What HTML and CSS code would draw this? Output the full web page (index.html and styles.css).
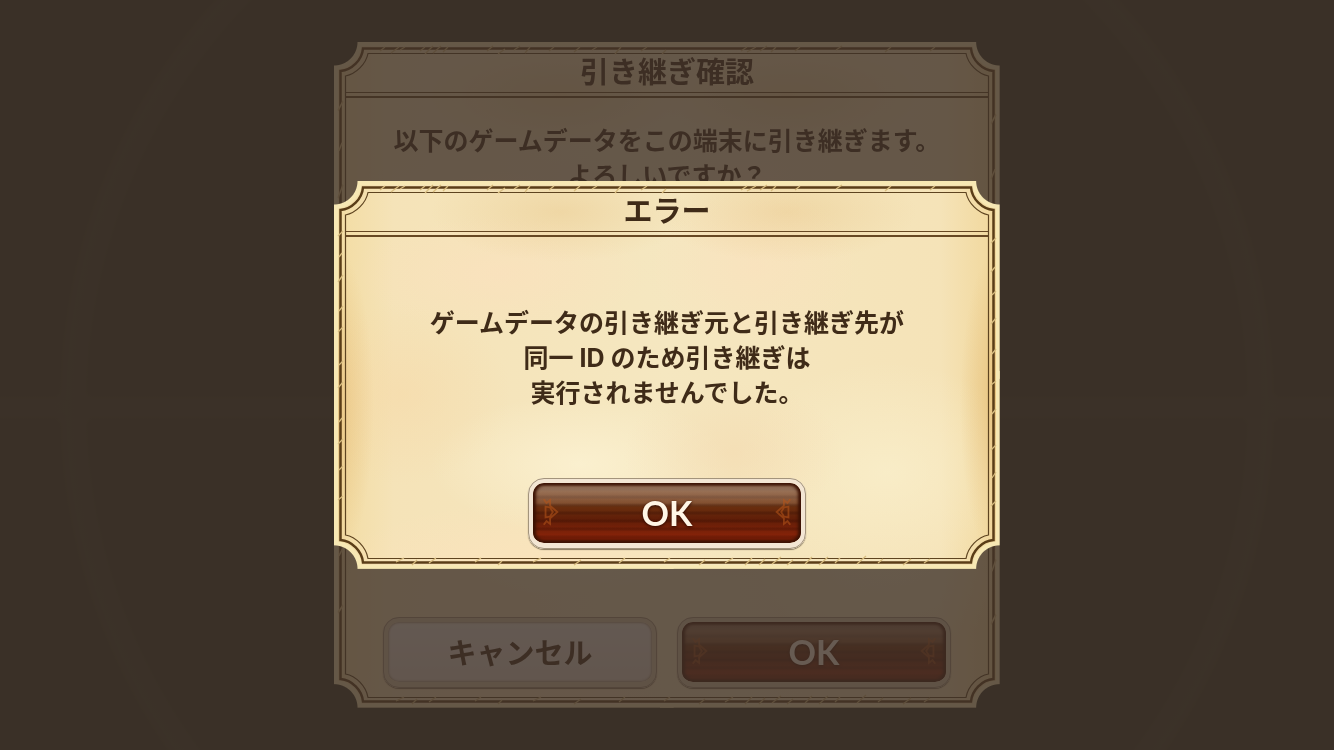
FILE: index.html
```html
<!DOCTYPE html>
<html lang="ja">
<head>
<meta charset="utf-8">
<meta name="viewport" content="width=device-width, initial-scale=1">
<title>エラー</title>
<link rel="stylesheet" href="styles.css">
</head>
<body>
<svg class="defs" aria-hidden="true">
  <symbol id="ornament" viewBox="0 0 22 38">
    <path d="M3 5 L6 9 L10 6 L10 12 L18 19 L10 26 L10 32 L6 29 L3 33 M5 13 L10 14 L13 19 L10 24 L5 25 Z" fill="none" stroke="#b8561a" stroke-width="2"/>
  </symbol>
</svg>
<main class="stage">
  <section class="panel panel-confirm" aria-labelledby="confirm-title">
    <h2 class="panel-title" id="confirm-title">引き継ぎ確認</h2>
    <p class="message">以下のゲームデータをこの端末に引き継ぎます。<br>よろしいですか？</p>
    <div class="actions">
      <button class="btn btn-light" type="button"><span>キャンセル</span></button>
      <button class="btn btn-brown" type="button">
        <svg class="mark" aria-hidden="true"><use href="#ornament"/></svg>
        <span>OK</span>
        <svg class="mark mark-end" aria-hidden="true"><use href="#ornament"/></svg>
      </button>
    </div>
  </section>
  <div class="shade"></div>
  <section class="panel panel-error" role="alertdialog" aria-modal="true" aria-labelledby="error-title" aria-describedby="error-text">
    <h1 class="panel-title" id="error-title">エラー</h1>
    <p class="message" id="error-text">ゲームデータの引き継ぎ元と引き継ぎ先が<br>同一 ID のため引き継ぎは<br>実行されませんでした。</p>
    <div class="actions">
      <button class="btn btn-brown" type="button">
        <svg class="mark" aria-hidden="true"><use href="#ornament"/></svg>
        <span>OK</span>
        <svg class="mark mark-end" aria-hidden="true"><use href="#ornament"/></svg>
      </button>
    </div>
  </section>
</main>
</body>
</html>
```

FILE: styles.css
```css
* { box-sizing: border-box; }

body {
  margin: 0;
  background: #323224;
  color: #3f2b18;
  font-family: Inter, "Noto Sans CJK JP", sans-serif;
}

.defs { position: absolute; width: 0; height: 0; }

.stage {
  min-height: 100vh;
  display: grid;
  grid-template-columns: minmax(0, 666px);
  justify-content: center;
  align-items: center;
  background:
    radial-gradient(circle 640px at 50% 405px, transparent 575px, #38392b 585px, #3a3b2c 600px, transparent 612px),
    linear-gradient(transparent 392px, #393a2b 402px, #393a2b 412px, transparent 424px),
    #323224;
}

.stage > .panel { grid-area: 1 / 1; }

.shade {
  position: fixed;
  inset: 0;
  background: rgba(60, 47, 40, 0.78);
}

.panel {
  position: relative;
  display: flex;
  flex-direction: column;
  padding: 12px 12px 20px;
  background:
    radial-gradient(ellipse 40px 160px at 0 58%, rgba(222, 172, 92, 0.45), transparent),
    radial-gradient(ellipse 40px 160px at 100% 58%, rgba(222, 172, 92, 0.5), transparent),
    radial-gradient(ellipse 130px 50px at 34% 8%, rgba(226, 182, 110, 0.3), transparent),
    radial-gradient(ellipse 130px 50px at 68% 8%, rgba(226, 182, 110, 0.3), transparent),
    radial-gradient(ellipse 150px 60px at 25% 24%, rgba(252, 224, 190, 0.6), transparent),
    radial-gradient(ellipse 110px 80px at 63% 22%, rgba(252, 224, 190, 0.5), transparent),
    radial-gradient(ellipse 110px 90px at 10% 55%, rgba(246, 216, 166, 0.5), transparent),
    radial-gradient(ellipse 110px 70px at 60% 70%, rgba(244, 216, 174, 0.5), transparent),
    radial-gradient(ellipse 150px 70px at 37% 73%, rgba(253, 244, 214, 0.7), transparent),
    radial-gradient(ellipse 150px 110px at 83% 75%, rgba(250, 240, 205, 0.7), transparent),
    radial-gradient(ellipse 200px 70px at 30% 100%, rgba(253, 226, 188, 0.7), transparent),
    linear-gradient(90deg, #f3dca2, #f5e3b8 9%, #f5e7c0 50%, #f5e3b8 91%, #f1d79a);
  -webkit-mask:
    radial-gradient(circle at 0 0, transparent 23px, #000 24px) 0 0 / 51% 51% no-repeat,
    radial-gradient(circle at 100% 0, transparent 23px, #000 24px) 100% 0 / 51% 51% no-repeat,
    radial-gradient(circle at 0 100%, transparent 23px, #000 24px) 0 100% / 51% 51% no-repeat,
    radial-gradient(circle at 100% 100%, transparent 23px, #000 24px) 100% 100% / 51% 51% no-repeat;
}

/* Double-line frame with scooped corners, stretched as nine slices */
.panel::after {
  content: "";
  position: absolute;
  inset: 0;
  border: 40px solid transparent;
  border-image: url("data:image/svg+xml,%3Csvg xmlns='http://www.w3.org/2000/svg' width='666' height='388' viewBox='0 0 666 388' fill='none'%3E%3Cpath d='M24 0H642A24 24 0 0 0 666 24V364A24 24 0 0 0 642 388H24A24 24 0 0 0 0 364V24A24 24 0 0 0 24 0Z' stroke='%23f7e8b4' stroke-width='8'/%3E%3Cpath d='M29 6.500H637C638 18 648 28 659.500 29V359C648 360 638 370 637 381.500H29C28 370 18 360 6.500 359V29C18 28 28 18 29 6.500Z' stroke='%235a3d17' stroke-width='2.500'/%3E%3Cpath d='M34 11.500H632C634 22 644 32 654.500 34V354C644 356 634 366 632 377.500H34C32 366 22 356 11.500 354V34C22 32 32 22 34 11.500Z' stroke='%235e4420' stroke-width='1.200'/%3E%3Cg stroke='%23d8bd80' stroke-width='1.300'%3E%3Cpath d='M46 9l5-4M57 11l8-6M66 8l5-3M86 9l5-4M91 12l8-8M99 11l8-7M109 10l5-5M153 9l6-5M164 12l7-5M180 8l6-4M191 11l5-6M215 9l5-4M240 10l6-5M258 8l5-3M281 12l6-7M307 9l6-4M328 12l4-4M407 9l6-4M413 10l9-5M426 9l7-5M437 10l5-5M461 9l5-4M502 8l6-4M551 10l6-5M596 9l5-4'/%3E%3Cpath d='M62 381l8-4M78 384l5-5M95 382l7-5M141 381l6-4M164 384l4-4M199 381l8-4M240 384l7-5M285 382l6-5M330 381l6-4M365 384l6-5M391 382l8-5M411 384l7-7M425 384l6-6M438 383l9-7M453 384l6-5M471 383l7-7M485 384l9-8M501 382l5-5M523 383l9-8M544 382l5-4M569 384l8-6M590 382l6-4'/%3E%3Cpath d='M4 55l5-5M5 76l3-4M4 101l5-7M5 130l4-5M4 151l5-5M5 184l4-4M4 207l5-6M5 241l3-4M4 263l5-5M5 289l4-4M4 319l5-4M657 62l5-5M657 91l4-5M658 114l4-4M657 143l5-6M658 173l4-5M657 204l5-4M658 233l4-5M657 269l5-5M658 297l4-6M657 325l5-5'/%3E%3C/g%3E%3C/svg%3E") 40 stretch;
  pointer-events: none;
}

.panel-title {
  margin: 0;
  height: 44px;
  line-height: 38px;
  font-size: 29px;
  font-weight: 700;
  text-align: center;
  border-bottom: 2px solid #674823;
  background: linear-gradient(#674823, #674823) 0 38px / 100% 1px no-repeat;
}

.message {
  flex: 1;
  margin: 0;
  font-size: 25px;
  font-weight: 700;
  line-height: 35px;
  text-align: center;
}

.actions {
  display: flex;
  justify-content: center;
  gap: 20px;
}

.panel-confirm { min-height: 666px; }
.panel-confirm .message { padding-top: 26px; }
.panel-error { min-height: 388px; }
.panel-error .message {
  display: flow-root;
  align-content: center;
  padding-top: 2px;
}

.btn {
  display: flex;
  align-items: center;
  justify-content: space-between;
  width: 278px;
  height: 71px;
  padding: 0 8px 2px;
  border: 5px solid #f3e6d4;
  border-bottom-width: 6px;
  border-radius: 16px;
  outline: 1px solid #a3947c;
  outline-offset: -1px;
  box-shadow: inset 0 0 3px 3px #3c1204, 0 1px 1px #85765c;
  color: #fff6e6;
  font-family: Lato, "Noto Sans", sans-serif;
  font-size: 34px;
  font-weight: 700;
  text-shadow: 0 1px 3px #2e0a00;
}

.btn-brown {
  background:
    linear-gradient(rgba(255, 240, 220, 0.4), rgba(255, 230, 200, 0.16) 34%, transparent 40%),
    repeating-linear-gradient(transparent 0 4px, rgba(30, 4, 0, 0.2) 5px 7px, transparent 8px),
    linear-gradient(#6b3d22, #6a300f 38%, #601e08 60%, #882309 90%, #711b04);
  background-origin: padding-box;
  background-clip: padding-box;
}

.panel-confirm .btn {
  width: 274px;
  border-color: #dccbae;
}

.btn-light {
  justify-content: center;
  background: linear-gradient(#efebe6, #e6ddd3) padding-box;
  box-shadow: inset 0 0 2px 1px #b3a48f, 0 1px 1px #85765c;
  color: #3f2b18;
  font-family: "Noto Sans CJK JP", sans-serif;
  font-size: 29px;
  text-shadow: none;
}

.mark { width: 20px; height: 36px; opacity: 0.55; }
.mark-end { transform: scaleX(-1); }

@media (max-width: 640px) {
  .message { font-size: 18px; line-height: 28px; }
  .actions { flex-wrap: wrap; }
}
```
